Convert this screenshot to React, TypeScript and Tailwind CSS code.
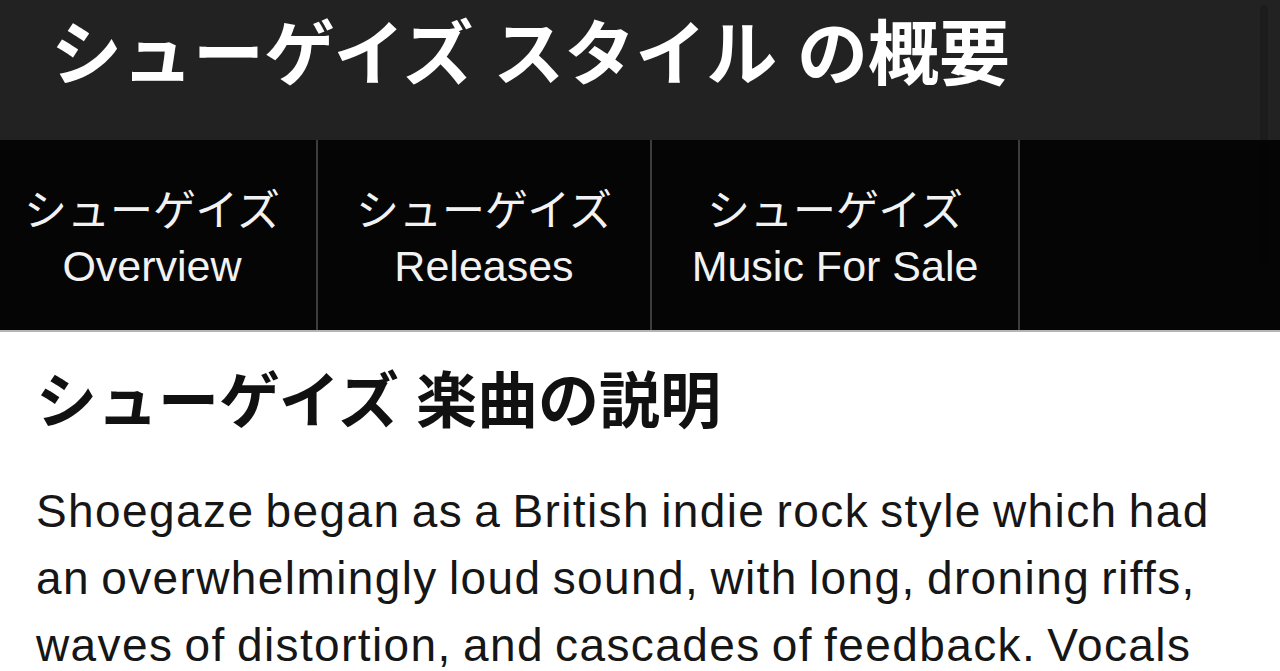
const font = "font-['Liberation_Sans','Noto_Sans_CJK_JP',sans-serif]";

const tabs = [
  { ja: "シューゲイズ", en: "Overview", width: "w-[318px]", pad: "pr-[12px]" },
  { ja: "シューゲイズ", en: "Releases", width: "w-[334px]", pad: "" },
  { ja: "シューゲイズ", en: "Music For Sale", width: "w-[368px]", pad: "" },
];

export default function App() {
  return (
    <div className={`relative h-[671px] w-[1280px] overflow-hidden bg-white ${font}`}>
      <header className="flex h-[140px] items-start bg-[#222222] pl-[51px] pt-[13px]">
        <h1 className="text-[71px] font-bold leading-[84px] text-white">
          シューゲイズ スタイル の概要
        </h1>
      </header>

      <nav className="flex h-[192px] border-b-2 border-[#b5b5b5] bg-[#050505]">
        {tabs.map((t) => (
          <a
            key={t.en}
            href="#"
            className={`flex ${t.width} ${t.pad} shrink-0 flex-col items-center justify-center border-r-2 border-[#3c3c3c] pt-[7px] text-[43px] leading-[55px] text-[#f2f2f2]`}
          >
            <span>{t.ja}</span>
            <span>{t.en}</span>
          </a>
        ))}
      </nav>

      <main className="pl-[36px] pr-[54px] pt-[28px]">
        <h2 className="text-[61px] font-bold leading-[84px] text-[#111111]">
          シューゲイズ 楽曲の説明
        </h2>
        <p className="mt-[34px] text-[46px] leading-[67px] tracking-[1.4px] text-[#161616] [word-spacing:-3px]">
          Shoegaze began as a British indie rock style which had an overwhelmingly loud sound, with
          long, droning riffs, waves of distortion, and cascades of feedback. Vocals were often buried
          beneath the guitars, blending into the wall of sound.
        </p>
      </main>

      {/* overlay scrollbar thumb */}
      <div className="absolute right-[12px] top-[5px] h-[260px] w-[8px] rounded-full bg-black/15" />
    </div>
  );
}
